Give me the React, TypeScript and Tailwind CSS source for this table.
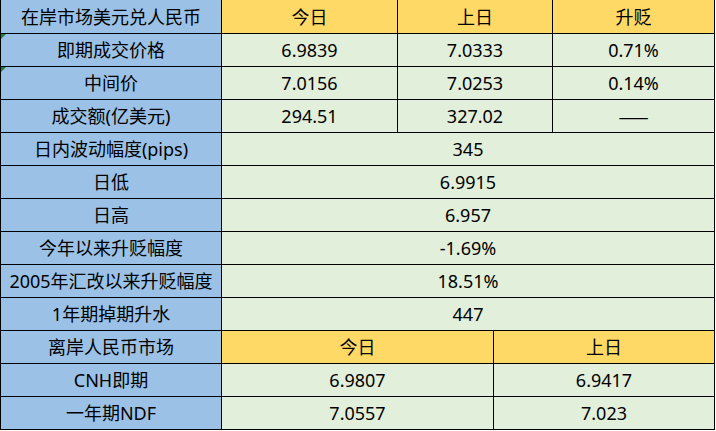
import React from "react";

const blue = "bg-[#9BC2E6]";
const yellow = "bg-[#FFD966]";
const green = "bg-[#E2EFDA]";

type Cell = { text: string; w: string; bg: string; tri?: boolean; cjk?: boolean };

function Row({ cells, h }: { cells: Cell[]; h: string }) {
  return (
    <div className={`flex ${h} border-b border-black`}>
      {cells.map((c, i) => (
        <div
          key={i}
          className={`relative flex items-center justify-center border-r border-black ${c.w} ${c.bg}`}
        >
          {c.tri && (
            <div className="absolute left-0 top-0 h-0 w-0 border-t-[5px] border-r-[5px] border-t-[#1E7F3C] border-r-transparent" />
          )}
          <span
            className="leading-none"
            style={c.cjk ? { fontFamily: '"Noto Sans CJK SC", sans-serif' } : undefined}
          >
            {c.text}
          </span>
        </div>
      ))}
    </div>
  );
}

export default function App() {
  const c1 = "w-[221px]";
  const c2 = "w-[176px]";
  const c3 = "w-[155px]";
  const c4 = "w-[162px]";
  const m = "w-[493px]";
  const b2 = "w-[272px]";
  const b3 = "w-[221px]";
  const h = "h-[33px]";
  return (
    <div
      className="w-[716px] h-[431px] bg-white text-black text-[18px]"
      style={{ fontFamily: '"Noto Sans", "Noto Sans CJK SC", sans-serif' }}
    >
      <div className="w-[715px] border-l border-black">
        <Row
          h="h-[34px]"
          cells={[
            { text: "在岸市场美元兑人民币", w: c1, bg: blue },
            { text: "今日", w: c2, bg: yellow },
            { text: "上日", w: c3, bg: yellow },
            { text: "升贬", w: c4, bg: yellow },
          ]}
        />
        <Row
          h={h}
          cells={[
            { text: "即期成交价格", w: c1, bg: blue, tri: true },
            { text: "6.9839", w: c2, bg: green },
            { text: "7.0333", w: c3, bg: green },
            { text: "0.71%", w: c4, bg: green },
          ]}
        />
        <Row
          h={h}
          cells={[
            { text: "中间价", w: c1, bg: blue, tri: true },
            { text: "7.0156", w: c2, bg: green },
            { text: "7.0253", w: c3, bg: green },
            { text: "0.14%", w: c4, bg: green },
          ]}
        />
        <Row
          h={h}
          cells={[
            { text: "成交额(亿美元)", w: c1, bg: blue },
            { text: "294.51", w: c2, bg: green },
            { text: "327.02", w: c3, bg: green },
            { text: "——", w: c4, bg: green, cjk: true },
          ]}
        />
        <Row h={h} cells={[{ text: "日内波动幅度(pips)", w: c1, bg: blue }, { text: "345", w: m, bg: green }]} />
        <Row h={h} cells={[{ text: "日低", w: c1, bg: blue }, { text: "6.9915", w: m, bg: green }]} />
        <Row h={h} cells={[{ text: "日高", w: c1, bg: blue }, { text: "6.957", w: m, bg: green }]} />
        <Row h={h} cells={[{ text: "今年以来升贬幅度", w: c1, bg: blue }, { text: "-1.69%", w: m, bg: green }]} />
        <Row h={h} cells={[{ text: "2005年汇改以来升贬幅度", w: c1, bg: blue }, { text: "18.51%", w: m, bg: green }]} />
        <Row h={h} cells={[{ text: "1年期掉期升水", w: c1, bg: blue }, { text: "447", w: m, bg: green }]} />
        <Row
          h={h}
          cells={[
            { text: "离岸人民币市场", w: c1, bg: blue },
            { text: "今日", w: b2, bg: yellow },
            { text: "上日", w: b3, bg: yellow },
          ]}
        />
        <Row
          h={h}
          cells={[
            { text: "CNH即期", w: c1, bg: blue },
            { text: "6.9807", w: b2, bg: green },
            { text: "6.9417", w: b3, bg: green },
          ]}
        />
        <Row
          h={h}
          cells={[
            { text: "一年期NDF", w: c1, bg: blue },
            { text: "7.0557", w: b2, bg: green },
            { text: "7.023", w: b3, bg: green },
          ]}
        />
      </div>
    </div>
  );
}
